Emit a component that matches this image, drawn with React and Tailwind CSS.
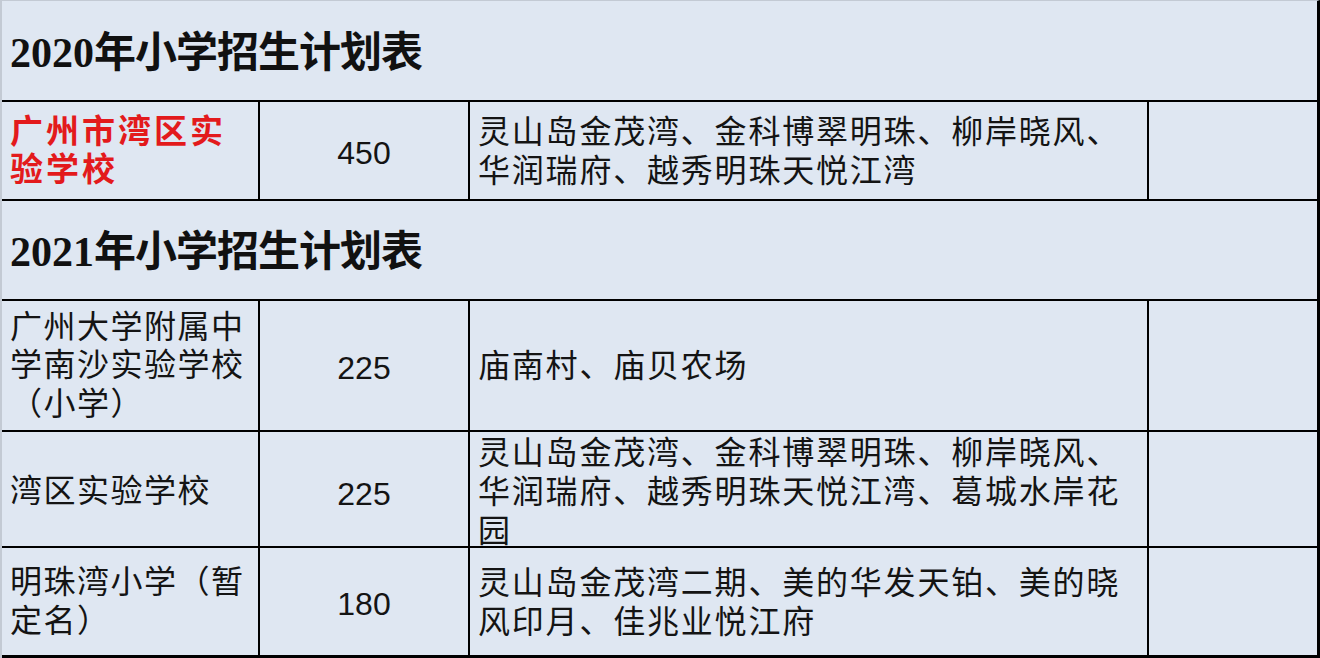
import React from 'react';

const sans = { fontFamily: '"Liberation Sans", "Noto Sans CJK SC", sans-serif' };

const TitleRow = ({ year, height }) => (
  <div className={`flex items-center border-b-2 border-black pl-2 pt-1 ${height}`}>
    <h2
      className="text-[42px] font-bold leading-none text-[#111]"
      style={{ fontFamily: '"Liberation Serif", "Noto Sans CJK SC", serif' }}
    >
      <span>{year}</span>
      <span className="tracking-[-1px]">年小学招生计划表</span>
    </h2>
  </div>
);

const DataRow = ({ school, count, areas, height, red, last }) => (
  <div
    className={`grid grid-cols-[258px_210px_679px_1fr] ${last ? 'border-b-[3px]' : 'border-b-2'} border-black ${height}`}
  >
    <div className="flex items-center border-r-2 border-black pl-2">
      <p
        className={
          red
            ? 'text-[33px] font-bold leading-[38px] tracking-[3px] text-[#e31a1c]'
            : 'text-[32px] leading-[38.5px] tracking-[1.5px] text-[#141414]'
        }
      >
        {school.map((line, i) => (
          <span key={i} className="block whitespace-nowrap">
            {line}
          </span>
        ))}
      </p>
    </div>
    <div className="flex items-center justify-center border-r-2 border-black pt-1">
      <span className="text-[32px] leading-none text-[#141414]">{count}</span>
    </div>
    <div className="flex items-center border-r-2 border-black pl-2 pt-0.5">
      <p className="text-[32px] leading-[39px] tracking-[1.8px] text-[#141414]">
        {areas.map((line, i) => (
          <span key={i} className="block whitespace-nowrap">
            {line}
          </span>
        ))}
      </p>
    </div>
    <div />
  </div>
);

export default function App() {
  return (
    <div
      className="flex h-[658px] w-[1320px] flex-col overflow-hidden border-t border-l-2 border-r-[3px] border-t-[#c3cad4] border-l-[#c3cad4] border-r-black bg-[#dfe7f2]"
      style={sans}
    >
      <TitleRow year="2020" height="h-[101px]" />
      <DataRow
        red
        height="h-[99px]"
        school={['广州市湾区实', '验学校']}
        count="450"
        areas={['灵山岛金茂湾、金科博翠明珠、柳岸晓风、', '华润瑞府、越秀明珠天悦江湾']}
      />
      <TitleRow year="2021" height="h-[100px]" />
      <DataRow
        height="h-[131px]"
        school={['广州大学附属中', '学南沙实验学校', '（小学）']}
        count="225"
        areas={['庙南村、庙贝农场']}
      />
      <DataRow
        height="h-[116px]"
        school={['湾区实验学校']}
        count="225"
        areas={['灵山岛金茂湾、金科博翠明珠、柳岸晓风、', '华润瑞府、越秀明珠天悦江湾、葛城水岸花', '园']}
      />
      <DataRow
        last
        height="h-[110px]"
        school={['明珠湾小学（暂', '定名）']}
        count="180"
        areas={['灵山岛金茂湾二期、美的华发天铂、美的晓', '风印月、佳兆业悦江府']}
      />
    </div>
  );
}
